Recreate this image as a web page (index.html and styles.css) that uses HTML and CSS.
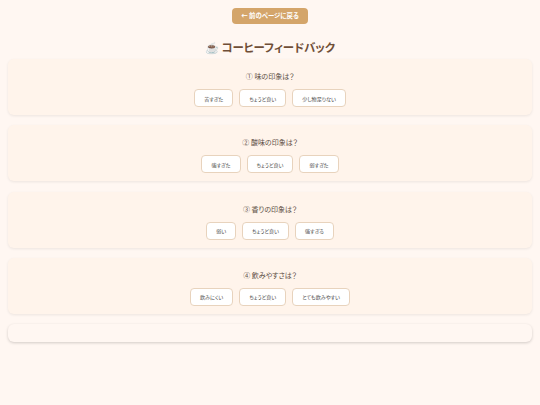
FILE: index.html
```html
<!DOCTYPE html>
<html lang="ja">
<head>
    <meta charset="UTF-8">
    <title>コーヒーフィードバック</title>
    <link rel="stylesheet" href="styles.css">
</head>
<body>
    <div class="top">
        <a class="back-button" href="#">← 前のページに戻る</a>
    </div>
    <h1 class="title">☕ コーヒーフィードバック</h1>

    <div class="card">
        <div class="question">① 味の印象は？</div>
        <div class="options">
            <button class="option">苦すぎた</button>
            <button class="option">ちょうど良い</button>
            <button class="option">少し物足りない</button>
        </div>
    </div>
    <div class="card">
        <div class="question">② 酸味の印象は？</div>
        <div class="options">
            <button class="option">強すぎた</button>
            <button class="option">ちょうど良い</button>
            <button class="option">弱すぎた</button>
        </div>
    </div>
    <div class="card">
        <div class="question">③ 香りの印象は？</div>
        <div class="options">
            <button class="option">弱い</button>
            <button class="option">ちょうど良い</button>
            <button class="option">強すぎる</button>
        </div>
    </div>
    <div class="card">
        <div class="question">④ 飲みやすさは？</div>
        <div class="options">
            <button class="option">飲みにくい</button>
            <button class="option">ちょうど良い</button>
            <button class="option">とても飲みやすい</button>
        </div>
    </div>
    <div class="card card-empty"></div>
</body>
</html>
```
FILE: styles.css
```css
body {
    font-family: "Noto Sans CJK JP", "Noto Sans", sans-serif;
    font-feature-settings: "palt";
    margin: 0;
    padding: 0 8px;
    background-color: #fff7f2;
    color: #5d4e45;
}

.top {
    display: flex;
    justify-content: center;
    padding-top: 8px;
}

.back-button {
    padding: 0 9px;
    height: 16px;
    line-height: 16px;
    font-size: 6.4px;
    font-weight: bold;
    color: white;
    background-color: #d4a56a;
    border-radius: 4px;
    text-decoration: none;
}

.title {
    margin: 13px 0 2px;
    text-align: center;
    font-size: 11.4px;
    line-height: 20px;
    color: #6f4e37;
}

.card {
    margin-bottom: 10.25px;
    padding: 11px 0 8px;
    background-color: #fff4eb;
    border-radius: 6px;
    box-shadow: 0 1px 3px rgba(0, 0, 0, 0.08);
    text-align: center;
}

.card-empty {
    height: 18px;
    padding: 0;
    background-color: #fff7f2;
    box-shadow: 0 1px 3px rgba(0, 0, 0, 0.18);
}

.question {
    font-size: 7px;
    line-height: 12px;
    margin-bottom: 7px;
}

.options {
    display: flex;
    justify-content: center;
    gap: 6px;
}

.option {
    height: 18px;
    padding: 0 9px;
    font-family: inherit;
    font-feature-settings: inherit;
    font-size: 5.1px;
    color: #444;
    background-color: white;
    border: 1px solid #e8d3bd;
    border-radius: 4px;
}
```
